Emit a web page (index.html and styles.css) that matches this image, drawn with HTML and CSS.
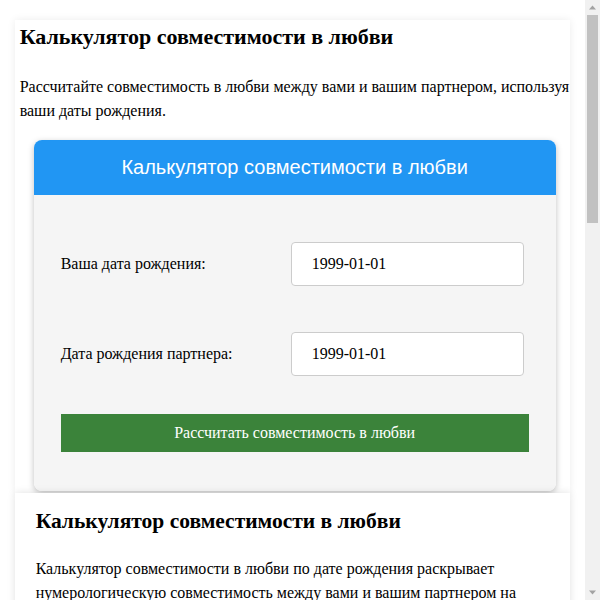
FILE: index.html
```html
<!DOCTYPE html>
<html lang="ru">
<head>
  <meta charset="UTF-8">
  <meta name="viewport" content="width=device-width, initial-scale=1.0">
  <title>Калькулятор совместимости в любви</title>
  <link rel="stylesheet" href="styles.css">
</head>
<body>

  <div class="container">
    <h1>Калькулятор совместимости в любви</h1>
    <p>Рассчитайте совместимость в любви между вами и вашим партнером, используя ваши даты рождения.</p>

    <div class="calculator">
      <div class="calc-header">Калькулятор совместимости в любви</div>
      <div class="calc-body">
        <div class="form-row">
          <label for="my-date">Ваша дата рождения:</label>
          <input type="text" id="my-date" value="1999-01-01">
        </div>
        <div class="form-row">
          <label for="partner-date">Дата рождения партнера:</label>
          <input type="text" id="partner-date" value="1999-01-01">
        </div>
        <button class="calc-btn">Рассчитать совместимость в любви</button>
      </div>
    </div>
  </div>

  <div class="info">
    <h2>Калькулятор совместимости в любви</h2>
    <p>Калькулятор совместимости в любви по дате рождения раскрывает нумерологическую совместимость между вами и вашим партнером на основе чисел жизненного пути, рассчитанных по датам рождения.</p>
    <p>Каждая дата рождения сводится к одному числу от 1 до 9. Эти числа описывают характер человека, его сильные стороны и то, как он ведет себя в отношениях.</p>
    <h3>Как пользоваться калькулятором</h3>
    <p>Введите свою дату рождения и дату рождения партнера в формате ГГГГ-ММ-ДД, затем нажмите кнопку «Рассчитать совместимость в любви». Калькулятор покажет процент совместимости и краткое описание вашей пары.</p>
    <h3>Что означает результат</h3>
    <p>Высокий процент говорит о том, что ваши числа хорошо дополняют друг друга. Низкий процент не означает, что отношения невозможны, он лишь указывает на области, которым стоит уделить больше внимания.</p>
    <p>Помните, что нумерология — это лишь один из взглядов на отношения. Взаимное уважение, доверие и общение значат гораздо больше, чем любые числа.</p>
    <h3>Часто задаваемые вопросы</h3>
    <p>Насколько точен калькулятор? Результат носит развлекательный характер и не должен быть единственным основанием для важных решений.</p>
    <p>Можно ли проверить совместимость с друзьями? Да, калькулятор подходит для любых двух людей, не только для романтических партнеров.</p>
  </div>

  <!-- browser scrollbar as it shows in the page capture -->
  <div class="scrollbar">
    <svg class="scroll-arrow" width="15" height="15" viewBox="0 0 15 15"><path d="M4 9.5 L7.5 5.5 L11 9.5 Z" fill="#a3a3a3"/></svg>
    <div class="scroll-thumb"></div>
    <div class="scroll-track"></div>
    <svg class="scroll-arrow" width="15" height="15" viewBox="0 0 15 15"><path d="M4 5.5 L7.5 9.5 L11 5.5 Z" fill="#a3a3a3"/></svg>
  </div>

</body>
</html>
```

FILE: styles.css
```css
body {
  font-family: "Liberation Serif", "Times New Roman", serif;
  margin: 0 15px 0 0;
  padding: 0;
  background-color: #fff;
  color: #000;
}

.container {
  box-sizing: border-box;
  width: 95%;
  margin: 20px auto 0;
  padding: 3px 0 2px 5px;
  background: #fff;
  box-shadow: 0 0 8px rgba(0, 0, 0, 0.08);
}

.container h1 {
  font-size: 22px;
  line-height: 28px;
  margin: 0 0 24px;
}

.container p {
  font-size: 16px;
  line-height: 24px;
  margin: 0 0 17px;
}

.calculator {
  width: 522px;
  margin: 0 0 0 14px;
  border-radius: 8px;
  overflow: hidden;
  box-shadow: 0 2px 6px rgba(0, 0, 0, 0.25);
}

.calc-header {
  background-color: #2196f3;
  color: #fff;
  height: 55px;
  line-height: 55px;
  text-align: center;
  font-family: "Liberation Sans", Arial, sans-serif;
  font-size: 20px;
}

.calc-body {
  background-color: #f5f5f5;
  padding: 47px 27px 39px;
}

.form-row {
  display: flex;
  align-items: center;
  justify-content: space-between;
  padding-right: 5px;
  margin-bottom: 46px;
}

.form-row:last-of-type {
  margin-bottom: 38px;
}

.form-row label {
  font-size: 16px;
}

.form-row input {
  box-sizing: border-box;
  width: 233px;
  height: 44px;
  padding: 0 20px;
  border: 1px solid #ccc;
  border-radius: 4px;
  background: #fff;
  font-family: "Liberation Serif", "Times New Roman", serif;
  font-size: 16px;
  color: #000;
}

.calc-btn {
  display: block;
  width: 100%;
  height: 38px;
  border: none;
  background-color: #3b833a;
  color: #fff;
  font-family: "Liberation Serif", "Times New Roman", serif;
  font-size: 16px;
  cursor: pointer;
}

.info {
  box-sizing: border-box;
  width: 95%;
  margin: 0 auto 20px;
  padding: 14px 21px 20px;
  background: #fff;
  box-shadow: 0 0 8px rgba(0, 0, 0, 0.12);
}

.info h2 {
  font-size: 21.5px;
  line-height: 28px;
  margin: 0 0 22px;
}

.info h3 {
  font-size: 19px;
  margin: 24px 0 12px;
}

.info p {
  font-size: 16px;
  line-height: 24px;
  margin: 0 0 16px;
}

.scrollbar {
  position: fixed;
  top: 0;
  right: 0;
  width: 15px;
  height: 100%;
  background-color: #f1f1f1;
  display: flex;
  flex-direction: column;
}

.scroll-arrow {
  display: block;
  flex: none;
}

.scroll-thumb {
  flex: none;
  height: 208px;
  margin: 0 2px;
  background-color: #c1c1c1;
}

.scroll-track {
  flex: 1;
}
```
